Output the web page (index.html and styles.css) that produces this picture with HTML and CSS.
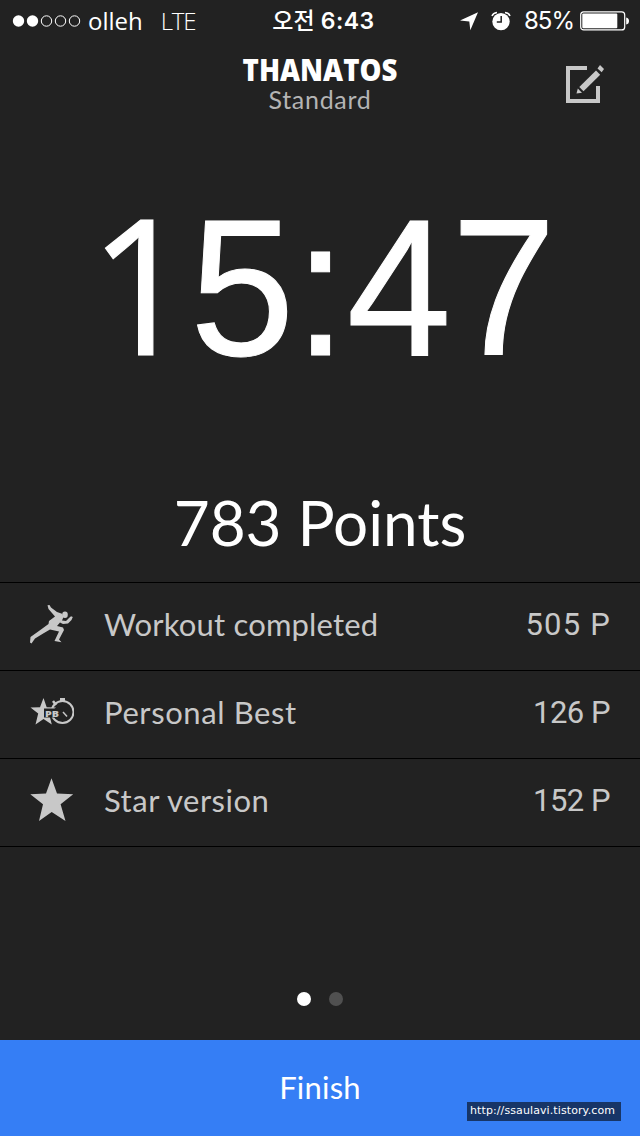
FILE: index.html
```html
<!DOCTYPE html>
<html lang="ko">
<head>
<meta charset="utf-8">
<title>Workout result</title>
<link rel="stylesheet" href="styles.css">
</head>
<body>
<div class="screen">
  <div class="status">
    <div class="status-left">
      <svg class="signal" width="70" height="14" viewBox="0 0 70 14"><g fill="#fff"><circle cx="6.500" cy="7" r="5.700"/><circle cx="20.500" cy="7" r="5.700"/></g><g fill="none" stroke="#fff" stroke-width="1"><circle cx="34.500" cy="7" r="5.200"/><circle cx="48.500" cy="7" r="5.200"/><circle cx="62.500" cy="7" r="5.200"/></g></svg>
      <span class="carrier">olleh</span>
      <span class="network">LTE</span>
    </div>
    <div class="clock">오전 <b>6:43</b></div>
    <div class="status-right">
      <svg class="locate" width="20" height="20" viewBox="0 0 20 20"><path fill="#fff" d="M19 1.300 11.300 19.300 10.300 10.500 1 9.600Z"/></svg>
      <svg class="alarm" width="20" height="20" viewBox="0 0 20 20"><circle cx="10" cy="10.600" r="8.700" fill="#fff"/><path d="M1 5Q2 2 6 1.500M19 5Q18 2 14 1.500" fill="none" stroke="#fff" stroke-width="1.500"/><path d="M10.200 5V11H5.800" fill="none" stroke="#222" stroke-width="1.500"/></svg>
      <span class="percent">85%</span>
      <svg class="battery" width="50" height="20" viewBox="0 0 50 20"><rect x=".7" y=".9" width="44" height="18" rx="3" fill="none" stroke="#fff" stroke-width="1.200"/><rect x="2.300" y="2.600" width="35" height="14.600" rx="1" fill="#fff"/><path d="M46.200 6.500Q49 7 49 10T46.200 13.500Z" fill="#fff"/></svg>
    </div>
  </div>
  <div class="heading">
    <div class="title">THANATOS</div>
    <div class="subtitle">Standard</div>
    <svg class="edit" width="42" height="40" viewBox="0 0 42 40"><path d="M23 4H4V37H34V22" fill="none" stroke="#c8c8c8" stroke-width="4"/><g fill="#c8c8c8"><path d="M32 6.500 36.200 10.700 19.500 27.300 15.300 23.100Z"/><path d="M33.500 4.500 36 1 40 5 37.700 8.300Z"/><path d="M13.800 24.500 18 28.700 12.500 29.500Z"/></g></svg>
  </div>
  <div class="timer"><span class="timer-one">1</span><span class="timer-rest">5:47</span></div>
  <div class="points">783 Points</div>
  <div class="rows">
    <div class="row">
      <svg class="icon icon-runner" width="44" height="44" viewBox="0 0 44 44"><g fill="#c8c8c8"><ellipse cx="35" cy="10.800" rx="2.800" ry="3.200"/><path d="M17.500 1.300 19.500 1 21 3.500 27 8 32 9.800 33.500 13 32 16.500 36 17 39 14 41 12.200 42.800 13 41.500 16 38 19.500 33 20 30 18.500 27 22 33 23.500 34 26 29 35.500 31.500 38.300 24.500 37 29 27.500 20 25.500 14 29 5 34.500 1.500 39.500 0 38.500 .5 33 11 25.500 18.500 20 19 17 25 12.500 18.500 5Z"/></g></svg>
      <span class="label">Workout completed</span><span class="value value-wide">505 P</span>
    </div>
    <div class="row">
      <svg class="icon" width="44" height="44" viewBox="0 0 44 44"><path fill="#c8c8c8" d="M13.500 8 16.700 17.300 26 17.500 19 23.500 21.800 34.500 13.500 29 5.500 34.500 8.200 23.500.5 17.500 10 17.300Z"/><g fill="none" stroke="#c8c8c8"><circle cx="32.500" cy="22" r="11" stroke-width="2"/><path d="M32.500 11V8" stroke-width="5"/><path d="M23 11 26 15" stroke-width="2.500"/><path d="M33 22 37 26.500" stroke-width="1.500"/></g><path fill="#222" d="M14 18.500H29.500V27.500H14Z"/><text class="badge-text" x="15" y="26.500" textLength="14" lengthAdjust="spacingAndGlyphs">PB</text></svg>
      <span class="label label-best">Personal Best</span><span class="value">126 P</span>
    </div>
    <div class="row">
      <svg class="icon" width="44" height="44" viewBox="0 0 44 44"><path fill="#c8c8c8" d="M21.500.2 27 15.500 43.200 16.200 30.600 26.300 35.500 43 21.700 34 9 43 13 26.300.3 16.200 16 15.500Z"/></svg>
      <span class="label label-star">Star version</span><span class="value">152 P</span>
    </div>
  </div>
  <div class="pager"><i class="dot active"></i><i class="dot"></i></div>
  <div class="finish">Finish<div class="source">http://ssaulavi.tistory.com</div></div>
</div>
</body>
</html>
```
FILE: styles.css
```css
body { margin: 0; background: #222; }
.screen { width: 640px; height: 1136px; background: #222; color: #fff; display: flex; flex-direction: column; overflow: hidden; font-family: Lato, sans-serif; white-space: nowrap; }
.status { height: 40px; display: grid; grid-template-columns: 1fr auto 1fr; align-items: center; font: 24px/40px Inter, sans-serif; }
.status-left { display: flex; align-items: center; padding-left: 12px; }
.signal { margin-bottom: 1px; }
.carrier { font-family: "Open Sans", sans-serif; margin-left: 6px; line-height: 40px; }
.network { font-family: "Open Sans", sans-serif; font-weight: 300; margin-left: 18px; letter-spacing: -1.2px; line-height: 40px; }
.clock { font-family: Inter, "Noto Sans CJK KR", sans-serif; font-weight: 500; font-size: 23px; line-height: 42px; padding-left: 7px; }
.clock b { font-weight: 600; letter-spacing: .5px; }
.status-right { display: flex; align-items: center; justify-content: flex-end; padding-right: 10px; }
.alarm { margin-left: 12px; margin-bottom: 1px; }
.percent { margin-left: 13px; letter-spacing: -1px; line-height: 42px; }
.battery { margin-left: 6px; margin-bottom: 1px; }
.heading { height: 100px; position: relative; text-align: center; }
.title { font: 800 30px/29px "Open Sans", sans-serif; padding-top: 15px; transform: scaleX(.92); }
.subtitle { font-size: 25px; line-height: 30px; color: #b4b4b4; letter-spacing: .7px; }
.edit { position: absolute; left: 564px; top: 24px; }
.timer { height: 300px; display: flex; justify-content: center; align-items: baseline; font: 188px/300px "Liberation Sans", Arial, sans-serif; transform: translate(1px, -8px) scaleY(1.032); -webkit-text-stroke: 1px #fff; }
.timer-one { font-family: "Open Sans", sans-serif; font-size: 182px; width: 104px; text-indent: 3px; }
.points { height: 142px; text-align: center; font-size: 62px; line-height: 165px; }
.rows { border-top: 1px solid #000; }
.row { height: 87px; border-bottom: 1px solid #000; display: flex; align-items: center; padding: 0 30px; font-size: 31px; line-height: 82px; color: #c8c8c8; }
.icon { flex: none; margin-bottom: 6px; }
.icon-runner { margin-bottom: 2px; }
.label { margin-left: 30px; flex: 1; height: 87px; letter-spacing: .18px; }
.label-best { letter-spacing: .6px; }
.label-star { letter-spacing: .5px; }
.value { font-family: Roboto, sans-serif; line-height: 84px; height: 87px; letter-spacing: -.5px; }
.value-wide { letter-spacing: 1.2px; margin-right: -1px; }
.badge-text { font: 900 9px "Open Sans", sans-serif; fill: #c8c8c8; }
.pager { flex: 1; display: flex; justify-content: center; gap: 18px; padding-top: 145px; }
.dot { width: 14px; height: 14px; border-radius: 50%; background: #505050; }
.dot.active { background: #fff; }
.finish { position: relative; height: 96px; flex: none; background: #357ef5; text-align: center; font-size: 31px; line-height: 95px; letter-spacing: .2px; }
.source { position: absolute; left: 467px; top: 62px; width: 151px; padding-left: 3px; height: 19px; background: #173567; text-align: left; font: 11px/17px "DejaVu Sans", sans-serif; letter-spacing: .1px; }
```
